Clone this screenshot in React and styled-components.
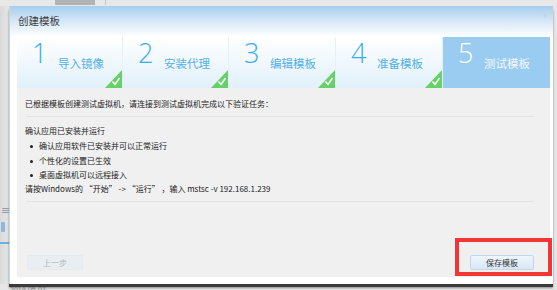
import React from 'react'
import styled, { createGlobalStyle } from 'styled-components'

const GlobalStyle = createGlobalStyle`
  html, body {
    margin: 0;
    padding: 0;
    background: #e4e4e4;
    font-family: "Noto Sans CJK SC", "Liberation Sans", sans-serif;
  }
  * { box-sizing: border-box; }
`

const steps = [
  { num: '1', label: '导入镜像', done: true },
  { num: '2', label: '安装代理', done: true },
  { num: '3', label: '编辑模板', done: true },
  { num: '4', label: '准备模板', done: true },
  { num: '5', label: '测试模板', active: true },
]

const Check = () => (
  <CheckMark width="17" height="18" viewBox="0 0 17 18">
    <polygon points="17,0 17,18 0,18" fill="#66d166" />
    <path d="M7.5 11.5 L10 14.5 L14.5 8" fill="none" stroke="#fff" strokeWidth="1.6" />
  </CheckMark>
)

const App = () => {
  return (
    <Page>
      <GlobalStyle />
      <TopStrip>
        <TabBlock />
        <TabTick />
      </TopStrip>
      <Middle>
        <LeftStrip>
          <MenuGlyph>≡</MenuGlyph>
          <FileGlyph />
          <BlueLine />
        </LeftStrip>
        <Window>
          <TitleBar>
            <Title>创建模板</Title>
            <Close>×</Close>
          </TitleBar>
          <Body>
            <Steps>
              {steps.map((s) => (
                <Step key={s.num} active={s.active}>
                  <Num active={s.active}>{s.num}</Num>
                  <StepLabel active={s.active}>{s.label}</StepLabel>
                  {s.done && <Check />}
                </Step>
              ))}
            </Steps>
            <Content>
              <Line>已根据模板创建测试虚拟机，请连接到测试虚拟机完成以下验证任务：</Line>
              <Rule />
              <Line>确认应用已安装并运行</Line>
              <List>
                <Item>确认应用软件已安装并可以正常运行</Item>
                <Item>个性化的设置已生效</Item>
                <Item>桌面虚拟机可以远程接入</Item>
              </List>
              <Line>请按Windows的 “开始” -&gt; “运行” ，输入 mstsc -v 192.168.1.239</Line>
              <Rule />
              <Footer>
                <Button disabled>上一步</Button>
                <Button>保存模板</Button>
              </Footer>
            </Content>
          </Body>
        </Window>
      </Middle>
      <BottomText>2019-05-07</BottomText>
      <Highlight />
    </Page>
  )
}

export default App

const Page = styled.div`
  position: relative;
  width: 557px;
  height: 290px;
  overflow: hidden;
  background: #e6e6e6;
`

const TopStrip = styled.div`
  height: 6px;
  display: flex;
  align-items: flex-start;
  padding-left: 55px;
  background: #e8e8e8;
`

const TabBlock = styled.div`
  width: 40px;
  height: 5px;
  background: #b3b3b3;
`

const TabTick = styled.div`
  width: 1px;
  height: 5px;
  margin-left: 10px;
  background: #c8c8c8;
`

const Middle = styled.div`
  display: flex;
`

const LeftStrip = styled.div`
  width: 9px;
  display: flex;
  flex-direction: column;
  align-items: flex-start;
  padding-top: 200px;
  background: linear-gradient(90deg, #dadada, #e6e6e6);
`

const MenuGlyph = styled.div`
  font-size: 9px;
  line-height: 10px;
  color: #666;
  margin-left: 1px;
`

const FileGlyph = styled.div`
  width: 4px;
  height: 10px;
  margin-top: 6px;
  margin-left: 1px;
  background: #8fb6dd;
  border-radius: 1px;
`

const BlueLine = styled.div`
  width: 9px;
  height: 2px;
  margin-top: 10px;
  background: #6cb0e4;
`

const Window = styled.div`
  width: 544px;
  height: 278px;
  display: flex;
  flex-direction: column;
  background: #fff;
  border-left: 1px solid #c9d6e0;
  box-shadow: 0 3px 0 #3b3b3b, 0 4px 2px rgba(0, 0, 0, 0.4);
`

const TitleBar = styled.div`
  height: 31px;
  display: flex;
  align-items: center;
  justify-content: space-between;
  padding: 0 5px 2px 8px;
  background: linear-gradient(#a7cdee, #d2e6f6 45%, #ffffff);
`

const Title = styled.div`
  font-size: 10.5px;
  color: #3a3a3a;
`

const Close = styled.div`
  font-family: "Liberation Sans", sans-serif;
  font-size: 9px;
  color: #cfcfcf;
  align-self: flex-start;
  margin-top: 5px;
`

const Body = styled.div`
  flex: 1;
  display: flex;
  flex-direction: column;
  padding: 0 3px 7px 7px;
`

const Steps = styled.div`
  height: 51px;
  display: grid;
  grid-template-columns: 106px 106px 107px 107px 107px;
`

const Step = styled.div`
  position: relative;
  display: flex;
  align-items: flex-start;
  padding-left: 15px;
  background: ${(p) => (p.active ? '#9acbf1' : 'linear-gradient(#ffffff, #e1f0fa)')};
  border-right: 1px solid ${(p) => (p.active ? '#9acbf1' : '#e6f0f7')};
`

const Num = styled.div`
  font-family: "Open Sans", "Liberation Sans", sans-serif;
  font-weight: 300;
  font-size: 27px;
  line-height: 30px;
  margin-top: 1px;
  width: 26px;
  color: ${(p) => (p.active ? '#ffffff' : '#3aaeec')};
`

const StepLabel = styled.div`
  font-size: 11.5px;
  margin-top: 18px;
  color: ${(p) => (p.active ? '#f2f8fd' : '#52b0e6')};
`

const CheckMark = styled.svg`
  position: absolute;
  right: 0;
  bottom: 0;
  display: block;
`

const Content = styled.div`
  flex: 1;
  display: flex;
  flex-direction: column;
  padding: 10px 16px 7px 8px;
  background: #f0f0f0;
  color: #222;
`

const Line = styled.div`
  font-size: 8px;
  line-height: 12px;
  white-space: nowrap;
`

const Rule = styled.div`
  height: 1px;
  margin: 6px 0 8px 2px;
  background: #e3e3e3;
`

const List = styled.ul`
  margin: 2px 0 0;
  padding: 0 0 0 14px;
  list-style: none;
`

const Item = styled.li`
  position: relative;
  font-size: 8px;
  line-height: 14.5px;
  &::before {
    content: '';
    position: absolute;
    left: -9px;
    top: 6px;
    width: 3px;
    height: 3px;
    border-radius: 50%;
    background: #222;
  }
`

const Footer = styled.div`
  margin-top: auto;
  display: flex;
  justify-content: space-between;
  padding-left: 2px;
`

const Button = styled.button`
  width: ${(p) => (p.disabled ? '56px' : '64px')};
  height: 15px;
  padding: 0;
  font-family: "Noto Sans CJK SC", sans-serif;
  font-size: 8px;
  border-radius: 2px;
  border: 1px solid ${(p) => (p.disabled ? '#e4ebf2' : '#c3d6ea')};
  color: ${(p) => (p.disabled ? '#b5b5b5' : '#333')};
  background: ${(p) => (p.disabled ? '#e9eef3' : 'linear-gradient(#eef5fc, #d9e7f5)')};
`

const BottomText = styled.div`
  margin: 2px 0 0 10px;
  font-family: "Liberation Sans", sans-serif;
  font-size: 7px;
  color: #777;
`

const Highlight = styled.div`
  position: absolute;
  left: 455px;
  top: 238px;
  width: 97px;
  height: 38px;
  border: 4px solid #f23535;
`
